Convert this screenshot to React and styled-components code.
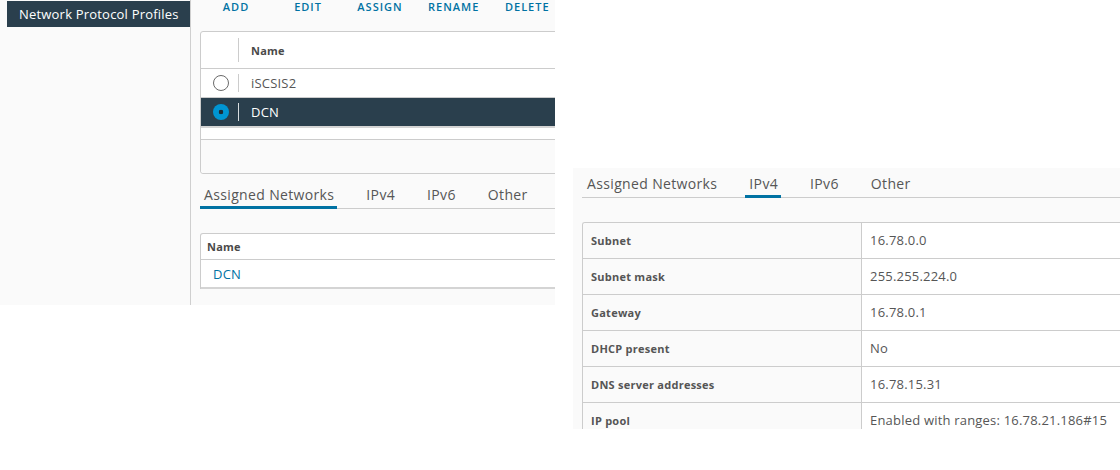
import React from "react";
import styled, { createGlobalStyle, css } from "styled-components";

const Global = createGlobalStyle`
  html, body { margin: 0; padding: 0; background: #ffffff; }
  body { font-family: "Open Sans", "Noto Sans", sans-serif; color: #565656; letter-spacing: 0.2px; }
  * { box-sizing: border-box; }
`;

const Canvas = styled.div`
  width: 1120px;
  height: 470px;
  display: grid;
  grid-template-columns: 555px 547px;
  column-gap: 18px;
  align-items: start;
  overflow: hidden;
`;

/* ---------- left screenshot ---------- */
const LeftPanel = styled.section`
  height: 305px;
  display: flex;
  background: #fafafa;
  overflow: hidden;
`;

const Sidebar = styled.nav`
  width: 191px;
  flex: none;
  padding: 1px 0 0 7px;
  border-right: 1px solid #cfcfcf;
`;

const NavItem = styled.div`
  height: 26px;
  display: flex;
  align-items: center;
  padding-left: 12px;
  font-size: 13px;
  color: ${(p) => (p.$active ? "#ffffff" : "#565656")};
  background: ${(p) => (p.$active ? "#2a3f4d" : "transparent")};
  white-space: nowrap;
`;

const Main = styled.div`
  flex: 1;
  min-width: 0;
  padding-left: 9px;
  overflow: hidden;
`;

const Toolbar = styled.div`
  height: 31px;
  display: flex;
  align-items: flex-start;
  width: 420px;
`;

const FlatButton = styled.button`
  min-width: 72px;
  height: 14px;
  padding: 0 12px;
  margin: 0;
  border: none;
  background: transparent;
  font-family: inherit;
  font-size: 11px;
  line-height: 14px;
  font-weight: 600;
  letter-spacing: 0.09em;
  color: #0072a3;
  text-align: center;
  white-space: nowrap;
`;

const Grid = styled.div`
  width: ${(p) => p.$width || 420}px;
  background: #ffffff;
  border: 1px solid #cccccc;
  border-radius: 3px;
  ${(p) =>
    p.$open &&
    css`
      border-bottom: none;
      border-radius: 3px 3px 0 0;
    `}
`;

const GridRow = styled.div`
  display: flex;
  align-items: center;
  height: ${(p) => p.$h}px;
  border-bottom: ${(p) => (p.$last ? "2px solid #d4d4d4" : "1px solid #cccccc")};
  background: ${(p) => (p.$selected ? "#2a3f4d" : "transparent")};
  color: ${(p) => (p.$selected ? "#ffffff" : "#565656")};
`;

const SelectCell = styled.div`
  width: 38px;
  height: 100%;
  flex: none;
  display: flex;
  align-items: center;
  justify-content: center;
  position: relative;
  padding-left: 2px;
  &::after {
    content: "";
    position: absolute;
    right: 0;
    top: ${(p) => p.$inset}px;
    bottom: ${(p) => p.$inset}px;
    width: 1px;
    background: ${(p) => (p.$light ? "#d8dde0" : "#cccccc")};
  }
`;

const Radio = styled.span`
  width: 16px;
  height: 16px;
  border-radius: 50%;
  display: block;
  ${(p) =>
    p.$checked
      ? css`
          background: radial-gradient(circle, #1d2b35 0 2px, #0095d3 2.6px);
        `
      : css`
          border: 1px solid #6a6a6a;
          background: #ffffff;
        `}
`;

const HeadCell = styled.div`
  padding-left: ${(p) => p.$pad}px;
  font-size: 11px;
  font-weight: 700;
  color: #4a4a4a;
`;

const Cell = styled.div`
  padding-left: ${(p) => p.$pad}px;
  font-size: 13px;
  color: ${(p) => (p.$link ? "#0072a3" : "inherit")};
`;

const GridBlank = styled.div`
  height: 12px;
  border-bottom: 1px solid #cccccc;
`;

const GridFooter = styled.div`
  height: 33px;
  background: #fafafa;
  border-radius: 0 0 3px 3px;
`;

const TabBar = styled.div`
  display: flex;
  gap: 25px;
  margin-top: ${(p) => p.$mt || 0}px;
  padding-left: ${(p) => p.$pl || 0}px;
  width: ${(p) => p.$width}px;
  border-bottom: 1px solid #cccccc;
`;

const Tab = styled.div`
  height: 30px;
  padding: 0 3px 0 4px;
  margin-bottom: -1px;
  display: flex;
  align-items: center;
  font-size: 14px;
  letter-spacing: 0.35px;
  color: #565656;
  white-space: nowrap;
  ${(p) =>
    p.$active &&
    css`
      box-shadow: inset 0 -3px 0 #0072a3;
    `}
`;

const Section = styled.div`
  margin-top: 24px;
`;

/* ---------- right screenshot ---------- */
const RightPanel = styled.section`
  margin-top: 168px;
  height: 261px;
  background: #fafafa;
  padding-left: 9px;
  overflow: hidden;
`;

const PropTable = styled.div`
  width: 560px;
  border: 1px solid #cccccc;
  border-right: none;
  border-radius: 3px 0 0 0;
  overflow: hidden;
`;

const PropRow = styled.div`
  display: grid;
  grid-template-columns: 279px 1fr;
  height: 36px;
  border-bottom: 1px solid #cccccc;
`;

const PropLabel = styled.div`
  display: flex;
  align-items: center;
  padding: 0 0 1px 8px;
  background: #fafafa;
  border-right: 1px solid #cccccc;
  font-size: 11px;
  font-weight: 700;
  letter-spacing: 0.25px;
  color: #555555;
`;

const PropValue = styled.div`
  display: flex;
  align-items: center;
  padding: 0 0 1px 8px;
  background: #ffffff;
  font-size: 13px;
  color: #565656;
  white-space: nowrap;
`;

const tabs = ["Assigned Networks", "IPv4", "IPv6", "Other"];

const ipv4 = [
  ["Subnet", "16.78.0.0"],
  ["Subnet mask", "255.255.224.0"],
  ["Gateway", "16.78.0.1"],
  ["DHCP present", "No"],
  ["DNS server addresses", "16.78.15.31"],
  ["IP pool", "Enabled with ranges: 16.78.21.186#15"],
];

export default function App() {
  return (
    <>
      <Global />
      <Canvas>
        <LeftPanel>
          <Sidebar>
            <NavItem $active>Network Protocol Profiles</NavItem>
          </Sidebar>
          <Main>
            <Toolbar>
              {["ADD", "EDIT", "ASSIGN", "RENAME", "DELETE"].map((b) => (
                <FlatButton key={b}>{b}</FlatButton>
              ))}
            </Toolbar>
            <Grid $width={420}>
              <GridRow $h={37}>
                <SelectCell $inset={6} />
                <HeadCell $pad={12}>Name</HeadCell>
              </GridRow>
              <GridRow $h={29}>
                <SelectCell $inset={5}>
                  <Radio />
                </SelectCell>
                <Cell $pad={12}>iSCSIS2</Cell>
              </GridRow>
              <GridRow $h={30} $selected $last>
                <SelectCell $inset={5} $light>
                  <Radio $checked />
                </SelectCell>
                <Cell $pad={12}>DCN</Cell>
              </GridRow>
              <GridBlank />
              <GridFooter />
            </Grid>
            <TabBar $mt={5} $width={420}>
              {tabs.map((t, i) => (
                <Tab key={t} $active={i === 0}>
                  {t}
                </Tab>
              ))}
            </TabBar>
            <Section>
              <Grid $width={420} $open>
                <GridRow $h={26}>
                  <HeadCell $pad={6}>Name</HeadCell>
                </GridRow>
                <GridRow $h={29} $last>
                  <Cell $pad={12} $link>
                    DCN
                  </Cell>
                </GridRow>
              </Grid>
            </Section>
          </Main>
        </LeftPanel>

        <RightPanel>
          <TabBar $width={560} $pl={1}>
            {tabs.map((t, i) => (
              <Tab key={t} $active={i === 1}>
                {t}
              </Tab>
            ))}
          </TabBar>
          <Section>
            <PropTable>
              {ipv4.map(([k, v]) => (
                <PropRow key={k}>
                  <PropLabel>{k}</PropLabel>
                  <PropValue>{v}</PropValue>
                </PropRow>
              ))}
            </PropTable>
          </Section>
        </RightPanel>
      </Canvas>
    </>
  );
}
